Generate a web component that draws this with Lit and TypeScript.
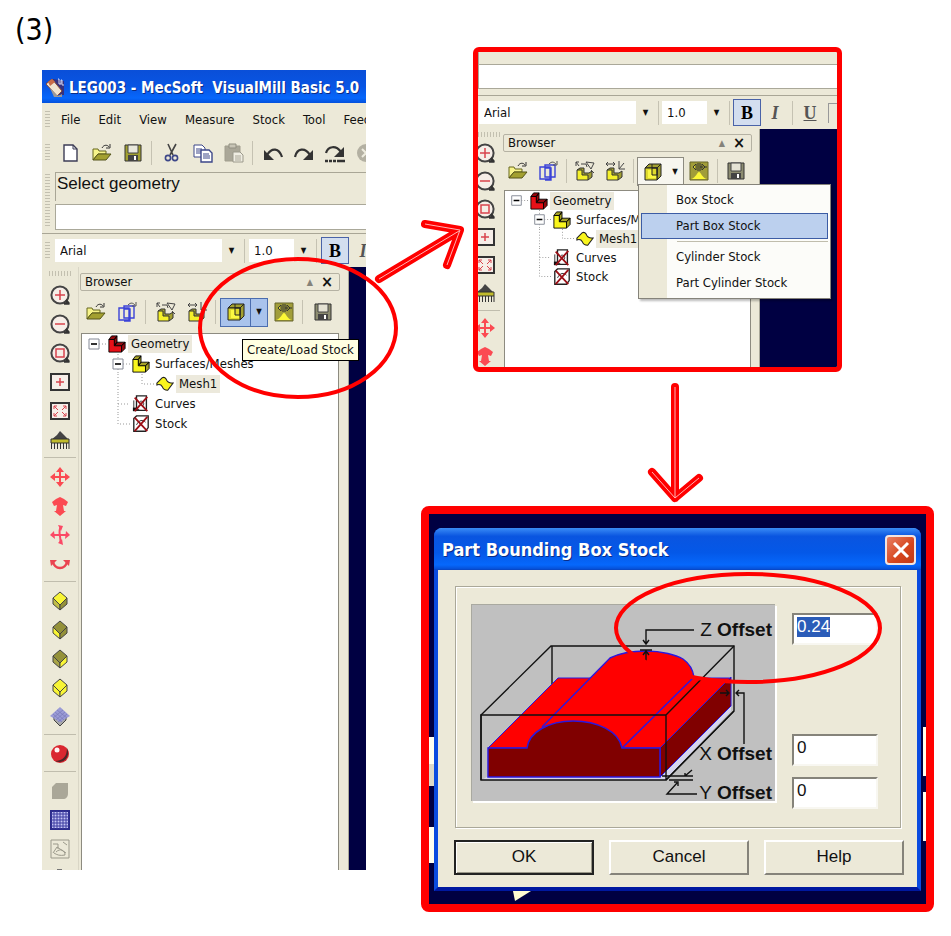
import { LitElement, html, svg, css, nothing, TemplateResult } from "lit";
import { customElement, query } from "lit/decorators.js";
import { classMap } from "lit/directives/class-map.js";

/* Every glyph is drawn on a 20 by 20 grid. */
const lPart = (front: string, dark: string) => svg`
  <path d="M1 5l3-4h6l-3 4z M7 5l3-4v7l-3 4z M7 12l3-4h9l-4 4z M15 12l4-4v7l-4 4z" fill=${dark} stroke="#000"/>
  <path d="M1 5h6v7h8v7H1z" fill=${front} stroke="#000"/>`;
const cube = (top: string, left: string, right: string) => svg`
  <path d="M10 1l7 6-7 7-7-7z" fill=${top} stroke="#444"/>
  <path d="M3 7l7 7v5l-7-6z" fill=${left} stroke="#444"/>
  <path d="M17 7l-7 7v5l7-6z" fill=${right} stroke="#444"/>`;
const lens = (inner: unknown) => svg`
  <circle cx="10" cy="10" r="8.6" fill="#f6eee8" stroke="#444" stroke-width="2"/>
  <path d="M14 18.5h5.500M16 15l3 4" stroke="#333" stroke-width="2.400"/>${inner}`;
const floppy = (body: string, inside: string) => svg`
  <path d="M2 2h16v16H2z" fill=${body} stroke="#333"/>
  <path d="M5 2h10v8H5z" fill=${inside} stroke="#444"/>
  <path d="M5 12h10v6H5z" fill="#444"/><path d="M11 13h2v4h-2z" fill="#fff"/>`;
const folder = svg`
  <path d="M1 17V6h5l1 2h7v3H6z" fill="#f7f48a" stroke="#66661e"/>
  <path d="M1 17l5-6h13l-5 6z" fill="#a3a030" stroke="#55551a"/>
  <path d="M10 5c2-4 6-3 7-1m1-3v4h-4" fill="none" stroke="#333"/>`;
const crossed = svg`<path d="M3 3l14 15M17 2L3 18" stroke="#9b0f16" stroke-width="2"/>`;

const glyphs = {
  app: svg`<path d="M1 5l7-4 11 2v14H10z" fill="#35317e"/><path d="M13 1h1v5h2V2h1v5h2" stroke="#d5d9f4" fill="none"/>
    <path d="M1 6l6-5 10 12-5 5z" fill="#efe3cf" stroke="#8a4c39"/><path d="M3 4l4-3 3 3-5 4z" fill="#c86b48"/><path d="M5 10l8 8 4-2v3H9z" fill="#999"/>`,
  fresh: svg`<path d="M3 2h9l4 4v12H3z" fill="#fff" stroke="#3c3c55" stroke-width="1.400"/><path d="M12 2v4h4" fill="none" stroke="#3c3c55"/>`,
  open: folder,
  save: floppy("#a2a030", "#e9e8dc"),
  saveGray: floppy("#8c8c70", "#e5e3d4"),
  cut: svg`<path d="M6 1l5 11M14 1L8 12" stroke="#444" stroke-width="1.600" fill="none"/>
    <circle cx="6" cy="15" r="2.600" fill="none" stroke="#3d4789" stroke-width="1.600"/><circle cx="13" cy="15" r="2.600" fill="none" stroke="#3d4789" stroke-width="1.600"/>`,
  copy: svg`<path d="M1 2h8l3 3v9H1z" fill="#fff" stroke="#3d4789"/><path d="M3 6h6M3 8h6M3 10h6" stroke="#3d4789"/>
    <path d="M8 7h8l3 3v9H8z" fill="#fff" stroke="#3d4789" stroke-width="1.400"/><path d="M10 11h6M10 13h7M10 15h7" stroke="#3d4789"/>`,
  paste: svg`<path d="M1 3h15v15H1z" fill="#aaa798" stroke="#a19e8e"/><path d="M5 1h7v4H5z" fill="#c7c4b5" stroke="#918f81"/>
    <path d="M9 9h7l3 3v7H9z" fill="#efede2" stroke="#9b998b"/><path d="M11 13h6M11 15h6M11 17h6" stroke="#aaa798"/>`,
  undo: svg`<path d="M4 12c5-8 12-7 15 2" fill="none" stroke="#333" stroke-width="2.200"/><path d="M1 7v10h10z" fill="#333"/>`,
  redo: svg`<path d="M1 14c2-9 10-10 15-2" fill="none" stroke="#333" stroke-width="2.200"/><path d="M19 7v10H9z" fill="#333"/>`,
  redoAll: svg`<path d="M1 10c2-7 10-8 15-1" fill="none" stroke="#333" stroke-width="2.200"/><path d="M19 4v10H9z" fill="#333"/>
    <path d="M0 18h3M4 18h3M8 18h3M12 18h8" stroke="#333" stroke-width="2.400"/>`,
  stop: svg`<circle cx="10" cy="10" r="9" fill="#b3b0a2"/><path d="M6 6l8 8M14 6l-8 8" stroke="#eeecdf" stroke-width="2"/>`,
  panels: svg`<path d="M2 6h10v12H2z M7 4h10v12H7z M7 7h6v12H7" fill="none" stroke="#3a42d8" stroke-width="1.400"/><path d="M11 3c3-3 5-2 7 0m1-3v4h-4" fill="none" stroke="#555"/>`,
  locate: svg`<path d="M2 9l3-2h4v5h5l3-2v6l-4 3" fill="#a3a030" stroke="#333"/><path d="M2 9h5v5h6v5H2z" fill="#f5f12a" stroke="#333"/>
    <path d="M1 5V1h3M1 1l3 4M6 3h5l1 3M11 1l8 1-3 6z M16 9l3 3" fill="none" stroke="#444"/>`,
  axes: svg`<path d="M2 9l3-2h4v5h5l3-2v6l-4 3" fill="#a3a030" stroke="#333"/><path d="M2 9h5v5h6v5H2z" fill="#f5f12a" stroke="#333"/>
    <path d="M1 3h9M3 1L1 3l2 2M8 1l2 2-2 2M14 0v8h6M14 8l5-6" fill="none" stroke="#444"/>`,
  stock: svg`<path d="M2 6l4-4h12l-4 4z M14 6l4-4v12l-4 4z" fill="#a3a030" stroke="#222"/><path d="M2 6h12v12H2z" fill="#ded92d" stroke="#222"/>
    <path d="M5 8h4v5h4v3H5z" fill="#fbf841"/><path d="M9 2v11h5V6H9" fill="none" stroke="#222"/>`,
  simulate: svg`<path d="M1 1h18v18H1z" fill="#a19d39" stroke="#66642a"/><path d="M2 18c5-1 6-7 8-7s3 6 8 7z" fill="#fcf836"/>
    <path d="M7 3L4 6l3 3z M13 3l3 3-3 3z" fill="#ded92d" stroke="#333"/><path d="M9 2v8M11 2v8M11 6h7" stroke="#333"/>`,
  partRed: lPart("#e81018", "#95080e"),
  partYellow: lPart("#f9f51d", "#a6a127"),
  mesh: svg`<path d="M1 9l6-6c2-1 4 0 5 3 1 2 3 3 7 3l-6 8c-3 0-5-1-6-4-1-2-3-3-6-2z" fill="#f9f51d" stroke="#222" stroke-width="1.200"/>`,
  curves: svg`<path d="M5 1h11v16H5z" fill="#fff" stroke="#222" stroke-width="1.500"/><path d="M2 6v10h6M9 7c4-1 5 3 3 5" fill="none" stroke="#222"/>
    <path d="M1 14h4v4H1z" fill="#111"/>${crossed}`,
  stockNone: svg`<path d="M2 4l3-3h13v13l-3 4H2z" fill="#fff" stroke="#222" stroke-width="1.500"/><path d="M5 11c3-6 7-6 10-3" fill="none" stroke="#222"/>${crossed}`,
  zoomIn: lens(svg`<path d="M10 5v10M5 10h10" stroke="#d8434d" stroke-width="1.500"/>`),
  zoomOut: lens(svg`<path d="M5 10h10" stroke="#d8434d" stroke-width="1.500"/>`),
  zoomWindow: lens(svg`<path d="M6 6h8v8H6z" fill="none" stroke="#d8434d" stroke-width="1.500"/>`),
  fitCenter: svg`<path d="M1 2h18v16H1z" fill="#f6eee8" stroke="#333" stroke-width="2"/><path d="M10 6v8M6 10h8" stroke="#d8434d" stroke-width="1.500"/>`,
  fitAll: svg`<path d="M1 2h18v16H1z" fill="#f6eee8" stroke="#333" stroke-width="2"/><path d="M4 8V5h3M13 5h3v3M16 12v3h-3M7 15H4v-3M4 5l4 4M16 5l-4 4M4 15l4-4M16 15l-4-4" fill="none" stroke="#d8434d"/>`,
  brush: svg`<path d="M7 5l3-4 4 4 5 5H1z" fill="#444"/><path d="M1 9h18v4H1z" fill="#c0bb2c" stroke="#333"/><path d="M1.500 13v6M4.500 13v6M7.500 13v6M10.500 13v6M13.500 13v6M16.500 13v6M19 13v6" stroke="#333"/>`,
  pan: svg`<path d="M10 0l4 5h-3v4h4V6l5 4-5 4v-3h-4v4h3l-4 5-4-5h3v-4H5v3l-5-4 5-4v3h4V5H6z" fill="#fb4a52"/>`,
  roll: svg`<path d="M2 6l4-3 4-2 4 2 4 3-2 4-3-1 1 6h2l-6 5-6-5h2l1-6-3 1z" fill="#fb4a52"/>`,
  rotate: svg`<path d="M11 2c-4 4 1 12-1 16M2 10h16" fill="none" stroke="#fb4a66" stroke-width="2"/><path d="M8 0l5 1-2 5zM13 20l-5-2 4-4zM4 6L0 10l5 4zM16 6l4 4-5 4z" fill="#fb4a66"/>`,
  spin: svg`<path d="M3 8c2 8 12 8 14 0" fill="none" stroke="#ea4450" stroke-width="2.400"/><path d="M0 6h7l-6 6zM20 6h-7l6 6z" fill="#ea4450"/>`,
  cubeTop: cube("#f8f535", "#c0bd49", "#94913a"),
  cubeLeft: cube("#94913a", "#f8f535", "#94913a"),
  cubeRight: cube("#94913a", "#a8a446", "#f8f535"),
  cubeAll: cube("#f8f535", "#f8f535", "#f8f535"),
  hatchTop: svg`<path d="M4 8l6 6 6-6v5l-6 6-6-6z" fill="#a9a9ab" stroke="#444"/><path d="M10 0l10 9-10 6L0 9z" fill="#9a9bd6"/>
    <path d="M7 3l10 8M5 5l9 8M3 7l9 8M13 3L3 11M15 5l-9 8M17 7l-9 8" stroke="#7779b8" stroke-width=".7"/>`,
  ball: svg`<circle cx="10" cy="10" r="9" fill="#da2730"/><path d="M17 4c4 8-3 17-12 13 8 0 12-5 12-13z" fill="#4d2527"/><circle cx="7" cy="6" r="2.500" fill="#fff4f4"/>`,
  blank: svg`<path d="M6 2h12v10c0 4-2 6-5 6H2V6z" fill="#aaa798"/>`,
  grid: svg`<path d="M1 1h18v18H1z" fill="#c4c5f4" stroke="#2c2c8c" stroke-width="2"/><path d="M4 1v18M7 1v18M10 1v18M13 1v18M16 1v18M1 4h18M1 7h18M1 10h18M1 13h18M1 16h18" stroke="#3c3ca0"/>`,
  sketch: svg`<path d="M1 1h18v18H1z" fill="none" stroke="#9b998b"/><path d="M3 5h5v5M3 14l4-6 9 6M6 13c4-4 9-2 9 3-5 1-8 0-11-2M13 3l4 3" fill="none" stroke="#9b998b"/>`,
  more: svg`<path d="M7 1h5v3H7z" fill="#777"/>`,
} as const;
type Glyph = keyof typeof glyphs;

const icon = (name: Glyph) => html`<svg class="icon" viewBox="0 0 20 20" aria-hidden="true">${glyphs[name]}</svg>`;

const sidebarGroups: Glyph[][] = [
  ["zoomIn", "zoomOut", "zoomWindow", "fitCenter", "fitAll", "brush"],
  ["pan", "roll", "rotate", "spin"],
  ["cubeTop", "cubeLeft", "cubeRight", "cubeAll", "hatchTop"],
  ["ball"],
  ["blank", "grid", "sketch", "more"],
];

/* Connector cells: b = root expander, m = child expander, t = tee, e = elbow, p = pipe, n = empty. */
const connectors: Record<string, TemplateResult<2>> = {
  b: svg`<path class="dots" d="M17 10h7"/><path d="M7 5h10v10H7z" fill="#fff" stroke="#858a96"/><path d="M9 10h6" stroke="#000" stroke-width="1.600"/>`,
  m: svg`<path class="dots" d="M12 0v20M17 10h7"/><path d="M7 5h10v10H7z" fill="#fff" stroke="#858a96"/><path d="M9 10h6" stroke="#000" stroke-width="1.600"/>`,
  t: svg`<path class="dots" d="M12 0v20M12 10h12"/>`,
  e: svg`<path class="dots" d="M12 0v10h12"/>`,
  p: svg`<path class="dots" d="M12 0v20"/>`,
  n: svg``,
};
const treeRows: { cells: string; glyph: Glyph; text: string; marked?: boolean }[] = [
  { cells: "b", glyph: "partRed", text: "Geometry", marked: true },
  { cells: "nm", glyph: "partYellow", text: "Surfaces/Meshes" },
  { cells: "npe", glyph: "mesh", text: "Mesh1", marked: true },
  { cells: "nt", glyph: "curves", text: "Curves" },
  { cells: "ne", glyph: "stockNone", text: "Stock" },
];

@customElement("app-root")
export class AppRoot extends LitElement {
  @query("#z-offset") zField!: HTMLInputElement;

  static styles = css`
    :host {
      display: block;
      background: #fff;
      color: #111;
      --face: #ece9d8;
      --navy: #000042;
      --ui: "DejaVu Sans Condensed", "Noto Sans", sans-serif;
      font: 13px/16px var(--ui);
    }
    * { box-sizing: border-box; }
    button, input, select { font: inherit; color: inherit; margin: 0; padding: 0; border: 0; border-radius: 0; background: none; appearance: none; outline: none; }
    h1, h2, ul { margin: 0; padding: 0; font-weight: normal; }
    .board {
      display: grid;
      grid-template-columns: minmax(0, 324fr) minmax(0, 513fr);
      column-gap: 55px;
      align-items: start;
      padding: 0 17px 24px 42px;
    }
    .step { height: 70px; padding-top: 14px; margin-left: -27px; font-size: 30px; line-height: 32px; color: #000; }
    .shot { position: relative; }
    .window { overflow: hidden; background: var(--face); display: flex; flex-direction: column; white-space: nowrap; }
    .main { height: 800px; --tool: 29px; --btn: 31px; --gap: 8px; --cell: 24px; --row: 20px; }
    .titlebar {
      height: 33px; flex: none; display: flex; align-items: center; gap: 4px; padding: 2px 3px 0;
      background: linear-gradient(#0a4fd8, #0855e4 50%, #0667fb 85%, #0350dc);
      color: #fff; font-weight: bold; font-size: 15px; text-shadow: 1px 1px #0a2c86; white-space: pre;
    }
    .icon { width: 20px; height: 20px; flex: none; display: block; }
    .bar { display: flex; align-items: center; flex: none; height: 33px; padding-left: 3px; }
    .grip { width: 5px; height: 18px; flex: none; margin-right: 5px; background: repeating-linear-gradient(#c3c0b0 0 1px, transparent 1px 3px); }
    .grip.tall { height: 54px; }
    .grip.wide { width: 23px; height: 5px; margin: 0; background: repeating-linear-gradient(90deg, #c3c0b0 0 1px, transparent 1px 3px); }
    .menubar .grip { margin-right: 2px; }
    .menubar button { padding: 0 9px; }
    .tool { width: var(--btn); height: 29px; flex: none; display: flex; align-items: center; justify-content: center; }
    .rule { width: 1px; height: 24px; flex: none; background: #c5c2b2; margin: 0 calc(var(--gap) - 4px) 0 3px; }
    .command { display: flex; align-items: center; flex: none; height: 65px; padding-left: 3px; border-bottom: 1px solid #a9a696; }
    .fields { flex: 1; display: flex; flex-direction: column; gap: 3px; }
    .prompt { height: 29px; padding: 1px; border: solid #a9a696; border-width: 1px 0 0 1px; font: 17px/20px "Liberation Sans", sans-serif; }
    .entry { width: 100%; height: 26px; background: #fff; border: 1px solid #aaa899; border-right: 0; }
    .format { height: 33px; margin-right: -11px; }
    .pick { position: relative; flex: none; height: 23px; background: #fff; display: flex; }
    .pick select { width: 100%; padding: 0 5px; }
    .pick::after {
      content: "▼"; position: absolute; right: 0; top: 0; width: 19px; height: 23px; background: var(--face);
      font-size: 8px; line-height: 24px; text-align: center; pointer-events: none;
    }
    .face { flex: 1; min-width: 100px; }
    .size { width: 64px; }
    .style { width: 28px; height: 27px; flex: none; font: bold 18px/24px "Liberation Serif", serif; color: #555; }
    .style.on { border: 1px solid #4a63a8; background: #d3deef; color: #000; }
    .italic { font-style: italic; }
    .under { text-decoration: underline; }
    .body { flex: 1; min-height: 0; display: flex; }
    .side { width: 37px; flex: none; padding-top: 4px; display: flex; flex-direction: column; align-items: center; border-right: 1px solid #d9d6c6; }
    .side .grip { margin-bottom: 4px; flex: none; }
    .side button { height: var(--tool); flex: none; display: flex; align-items: center; }
    .side hr { width: 32px; height: 1px; flex: none; margin: 3px 0 4px; border: 0; background: #c0bdad; }
    .browser { flex: 1; min-width: 0; display: flex; flex-direction: column; padding: 6px 8px 0 1px; border-right: 1px solid #aaa899; }
    .caption { height: 18px; flex: none; display: flex; align-items: center; gap: 8px; padding: 0 6px 0 4px; border: 1px solid #b5b2a3; border-radius: 2px; }
    .caption span { flex: 1; }
    .fold { color: #85837a; font-size: 9px; }
    .close { font: bold 16px/14px var(--ui); }
    .strip { display: flex; align-items: center; height: 42px; flex: none; }
    .drop { width: 17px; height: 29px; flex: none; font-size: 8px; }
    .hot { border: 1px solid #4b6dae; background: #a9c3ec; }
    .drop.hot { border-left: 0; }
    .raised { background: #f7f6ef; border: solid #8d8b80; border-width: 1px 0 0 1px; }
    .drop.raised { border-width: 1px 1px 0 0; }
    .tree { flex: 1; min-height: 0; margin: 0 1px; background: #fff; border: solid #8d8b80; border-width: 1px 1px 0; list-style: none; }
    .tree li { display: flex; align-items: center; height: var(--row); }
    .tree .cell { width: var(--cell); height: var(--row); flex: none; display: block; }
    .dots { fill: none; stroke: #999; stroke-dasharray: 1 2; }
    .tree .icon { width: 18px; height: 18px; margin: 0 2px; }
    .tree .label { padding: 1px 3px; }
    .tree .marked { background: #ece9dc; }
    .view { flex: none; width: 17px; background: var(--navy); }
    .tip { position: absolute; left: 200px; top: 269px; padding: 2px 4px; border: 1px solid #000; background: #ffffe1; color: #111; white-space: nowrap; }
    .mark { position: absolute; overflow: visible; fill: none; pointer-events: none; }
    .ring { stroke: #f00; stroke-width: 4; fill: none; }
    .shaft { stroke: #f00; stroke-width: 8; stroke-linecap: round; stroke-linejoin: round; fill: none; }
    .core { stroke: #ffb3b3; stroke-width: 1; fill: none; }
    .mark-ring { left: 154px; top: 186px; width: 204px; height: 144px; }

    .right { padding-top: 47px; display: flex; flex-direction: column; }
    .second { margin: 0 92px 0 52px; }
    .detail { height: 325px; border: 5px solid #f00; border-radius: 6px; --tool: 28px; --btn: 30px; --gap: 7px; --cell: 23px; --row: 19px; }
    .detail .command { height: 44px; padding: 0; align-items: flex-end; }
    .detail .fields { gap: 0; padding-bottom: 6px; }
    .detail .entry { height: 25px; }
    .detail .prompt { height: 32px; }
    .detail .format { padding-left: 1px; }
    .detail .side { width: 25px; padding-top: 3px; border: 0; align-items: flex-start; margin-left: -3px; }
    .detail .side .grip { margin: 0 0 2px 3px; }
    .detail .side hr { margin: 3px 0; width: 25px; }
    .detail .browser { padding: 5px 7px 0 3px; }
    .detail .strip { height: 38px; }
    .detail .view { width: 77px; }
    .handle { width: 20px; height: 20px; flex: none; margin-left: 4px; border: solid #999; border-width: 1px 0 0 1px; }
    .popup {
      position: absolute; left: 165px; top: 137px; width: 193px; height: 115px; padding: 2px;
      border: 1px solid #85837a; background: linear-gradient(90deg, #ece9d8 28px, #fcfcf9 28px); box-shadow: 2px 2px 2px #0004;
    }
    .popup button { display: block; width: 100%; height: 26px; padding-left: 35px; text-align: left; }
    .popup .chosen { border: 1px solid #3c5ca4; background: #bcd0ee; padding-left: 34px; }
    .popup hr { height: 1px; margin: 2px 0 2px 36px; border: 0; background: #c0bdad; }
    .mark-across { left: -102px; top: 170px; width: 94px; height: 70px; }
    .down { display: block; width: 64px; height: 134px; align-self: center; overflow: visible; }

    .third { border: 8px solid #f00; border-radius: 8px; background: var(--navy); padding: 14px 5px 13px; }
    .behind { position: absolute; width: 5px; height: 49px; background: #fffff0; border-bottom: 22px solid #dcd9c8; }
    .b1 { left: 0; top: 223px; } .b2 { left: 0; top: 313px; height: 36px; border-bottom: 0; }
    .b3 { right: 0; top: 213px; border-bottom: 0; width: 3px; } .b4 { right: 0; top: 278px; border-bottom: 0; width: 3px; }
    .pointer { position: absolute; left: 84px; bottom: 2px; width: 18px; height: 11px; }
    .dialog { border: 4px solid #0a4be0; border-top: 0; border-bottom-color: #0018a0; border-radius: 8px 8px 0 0; background: var(--face); position: relative; }
    .head {
      height: 42px; margin: 0 -4px; padding: 3px 5px 0 8px; border-radius: 8px 8px 0 0; display: flex; align-items: center; justify-content: space-between;
      background: linear-gradient(#3a8cf6, #0a55e0 20%, #0458e8 60%, #0668fc 90%, #0650d8);
      border-bottom: 1px solid #0848c8;
    }
    .head h2 { color: #fff; font: bold 18px/24px var(--ui); text-shadow: 1px 1px #0a2c86; white-space: nowrap; }
    .exit { width: 31px; height: 30px; border: 2px solid #f4e4df; border-radius: 4px; background: linear-gradient(135deg, #e98063, #d5441c 60%, #c03a16); display: flex; align-items: center; justify-content: center; }
    .group { margin: 16px 16px 0 17px; padding: 17px 22px 26px 15px; border: 1px solid #aaa899; box-shadow: inset 1px 1px #fff, 1px 1px #fff; display: flex; justify-content: space-between; }
    .figure { position: relative; width: 304px; height: 197px; background: #c0c0c0; border: solid #a9a9a0; border-width: 1px 0 0 1px; box-shadow: 2px 2px #fff; }
    .figure svg { display: block; width: 303px; height: 196px; }
    .figure label { position: absolute; right: 3px; font: bold 19px/22px "Liberation Sans", sans-serif; color: #111; }
    .axis { font-weight: normal; }
    .lz { top: 14px; } .lx { top: 138px; } .ly { top: 177px; }
    .values { display: grid; align-content: space-between; padding-top: 9px; width: 86px; margin-bottom: -8px; }
    .values input { width: 86px; height: 32px; padding: 0 3px 5px; background: #fff; border: 2px solid; border-color: #85837a #f8f7f1 #f8f7f1 #85837a; font: 17px/20px "Liberation Sans", sans-serif; }
    .values input + input { margin-top: 88px; }
    .values input + input + input { margin-top: 10px; }
    .values input::selection { background: #2b5cb8; color: #fff; }
    .actions { display: grid; grid-template-columns: repeat(3, 1fr); gap: 15px; padding: 12px 13px 12px 16px; }
    .actions button { height: 35px; padding-bottom: 2px; border: 2px solid; border-color: #fff #85837a #85837a #fff; font: 17px/20px "Liberation Sans", sans-serif; }
    .actions .default { border: 2px solid #222; box-shadow: inset 1px 1px #fff, inset -1px -1px #999788; }
    .mark-oval { left: 184px; top: 58px; width: 270px; height: 113px; }
  `;

  firstUpdated() {
    this.zField.focus({ preventScroll: true });
    this.zField.select();
  }

  private tools(names: Glyph[]) {
    return names.map((n) => html`<button class="tool" aria-label=${n}>${icon(n)}</button>`);
  }

  private format(full: boolean) {
    return html`<div class="bar format">
      ${full ? html`<span class="grip"></span>` : nothing}
      <span class="pick face"><select aria-label="Font"><option>Arial</option></select></span>
      <span class="rule"></span>
      <span class="pick size"><select aria-label="Size"><option>1.0</option></select></span>
      <span class="rule"></span>
      <button class="style on">B</button>
      <button class="style italic">I</button>
      ${full ? nothing : html`<span class="rule"></span><button class="style under">U</button><span class="handle"></span>`}
    </div>`;
  }

  private body(menuOpen: boolean) {
    const state = classMap({ tool: true, hot: !menuOpen, raised: menuOpen });
    const drop = classMap({ drop: true, hot: !menuOpen, raised: menuOpen });
    return html`<div class="body">
      <div class="side">
        <span class="grip wide"></span>
        ${sidebarGroups.map((g, i) => html`${i ? html`<hr />` : nothing}${g.map((n) => html`<button aria-label=${n}>${icon(n)}</button>`)}`)}
      </div>
      <div class="browser">
        <div class="caption"><span>Browser</span><button class="fold" aria-label="Collapse">▲</button><button class="close" aria-label="Close">×</button></div>
        <div class="strip">
          ${this.tools(["open", "panels"])}<span class="rule"></span>${this.tools(["locate", "axes"])}<span class="rule"></span>
          <button class=${state} aria-label="Create/Load Stock">${icon("stock")}</button>
          <button class=${drop} aria-label="Stock menu">▼</button>
          ${this.tools(["simulate"])}<span class="rule"></span>${this.tools(["saveGray"])}
        </div>
        <ul class="tree">
          ${treeRows.map((r) => html`<li>
            ${[...r.cells].map((c) => html`<svg class="cell" viewBox="0 0 24 20" preserveAspectRatio="none">${connectors[c]}</svg>`)}
            ${icon(r.glyph)}<span class=${classMap({ label: true, marked: !!r.marked })}>${r.text}</span>
          </li>`)}
        </ul>
      </div>
      <div class="view"></div>
    </div>`;
  }

  private drawing() {
    return html`<svg viewBox="0 0 303 196" aria-hidden="true">
      <g fill="none" stroke="#111" stroke-width="1.400">
        <path d="M9 175L9 110 79 41H262V106L194 175M80 41V110"/>
      </g>
      <path d="M10 175l6-4h172l71-70v5l-66 69z" fill="#d5d5ec"/>
      <path d="M16 143L86 73H259L188 143z" fill="#f00" stroke="#2a18e0"/>
      <path d="M70 122L138 53c10-5 20-7 36-7s30 4 37 8c7 5 10 11 11 18L150 143C140 110 90 108 70 122z" fill="#f00"/>
      <path d="M70 122L138 53c10-5 20-7 36-7s30 4 37 8c7 5 10 11 11 18M150 143l72-71" fill="none" stroke="#2a18e0" stroke-width="1.400"/>
      <path d="M188 143l71-71v29l-71 71z" fill="#800000" stroke="#2a18e0"/>
      <path d="M16 172V143H55c2-16 22-27 46-27s46 10 49 27h38v29z" fill="#800000" stroke="#2a18e0" stroke-width="1.500"/>
      <g fill="none" stroke="#111" stroke-width="1.400">
        <path d="M9 110H194V175H9zM194 110L262 41M194 175l68-69"/>
        <path d="M222 25H174V39M171 35l3 4 3-4M174 46v10M168 45h12M171 50l3-4 3 4"/>
        <path d="M272 139V88h-8M267 85l-3 3 3 3M248 88h9M254 85l3 3-3 3"/>
        <path d="M190 171h31M197 175h24M225 189H195l10-11M202 177h4v4M220 165l-7 6M213 168v3h4"/>
      </g>
    </svg>`;
  }

  render() {
    return html`<main class="board">
      <section>
        <h1 class="step">(3)</h1>
        <div class="shot">
          <div class="window main">
            <div class="titlebar">${icon("app")}<span>LEG003 - MecSoft  VisualMill Basic 5.0</span></div>
            <nav class="bar menubar">
              <span class="grip"></span>
              ${["File", "Edit", "View", "Measure", "Stock", "Tool", "Feeds"].map((m) => html`<button>${m}</button>`)}
            </nav>
            <div class="bar">
              <span class="grip"></span>
              ${this.tools(["fresh", "open", "save"])}<span class="rule"></span>${this.tools(["cut", "copy", "paste"])}<span class="rule"></span>
              ${this.tools(["undo", "redo", "redoAll", "stop"])}
            </div>
            <div class="command">
              <span class="grip tall"></span>
              <div class="fields"><label class="prompt" for="command">Select geometry</label><input id="command" class="entry" /></div>
            </div>
            ${this.format(true)} ${this.body(false)}
          </div>
          <div class="tip" role="tooltip">Create/Load Stock</div>
          <svg class="mark mark-ring" viewBox="0 0 204 144"><ellipse class="ring" cx="102" cy="72" rx="98" ry="69"/></svg>
        </div>
      </section>
      <section class="right">
        <div class="shot second">
          <div class="window detail">
            <div class="command">
              <div class="fields"><label class="prompt" for="command2">Select geometry</label><input id="command2" class="entry" /></div>
            </div>
            ${this.format(false)} ${this.body(true)}
          </div>
          <div class="popup" role="menu">
            <button role="menuitem">Box Stock</button>
            <button role="menuitem" class="chosen">Part Box Stock</button>
            <hr />
            <button role="menuitem">Cylinder Stock</button>
            <button role="menuitem">Part Cylinder Stock</button>
          </div>
          <svg class="mark mark-across" viewBox="0 0 94 70">
            <path class="shaft" d="M8 62L88 14M54 7l35 6-13 35"/><path class="core" d="M8 62L88 14M54 7l35 6-13 35"/>
          </svg>
        </div>
        <svg class="down" viewBox="0 0 64 134" aria-hidden="true">
          <path class="shaft" d="M29 15V126M6 100l23 26 24-20"/><path class="core" d="M29 15V126M6 100l23 26 24-20"/>
        </svg>
        <div class="shot third">
          <span class="behind b1"></span><span class="behind b2"></span><span class="behind b3"></span><span class="behind b4"></span>
          <form class="dialog" @submit=${(e: Event) => e.preventDefault()}>
            <header class="head">
              <h2>Part Bounding Box Stock</h2>
              <button type="button" class="exit" aria-label="Close"><svg class="icon" viewBox="0 0 20 20"><path d="M3 3l14 14M17 3L3 17" stroke="#fff" stroke-width="3"/></svg></button>
            </header>
            <div class="group">
              <div class="figure">
                ${this.drawing()}
                <label class="lz" for="z-offset"><span class="axis">Z</span> Offset</label>
                <label class="lx" for="x-offset"><span class="axis">X</span> Offset</label>
                <label class="ly" for="y-offset"><span class="axis">Y</span> Offset</label>
              </div>
              <div class="values">
                <input id="z-offset" value="0.24" /><input id="x-offset" value="0" /><input id="y-offset" value="0" />
              </div>
            </div>
            <div class="actions"><button class="default">OK</button><button type="button">Cancel</button><button type="button">Help</button></div>
          </form>
          <svg class="pointer" viewBox="0 0 18 11"><path d="M0 0h18L2 10z" fill="#fffbd0"/></svg>
          <svg class="mark mark-oval" viewBox="0 0 270 113"><ellipse class="ring" cx="135" cy="56" rx="132" ry="54"/></svg>
        </div>
      </section>
    </main>`;
  }
}
